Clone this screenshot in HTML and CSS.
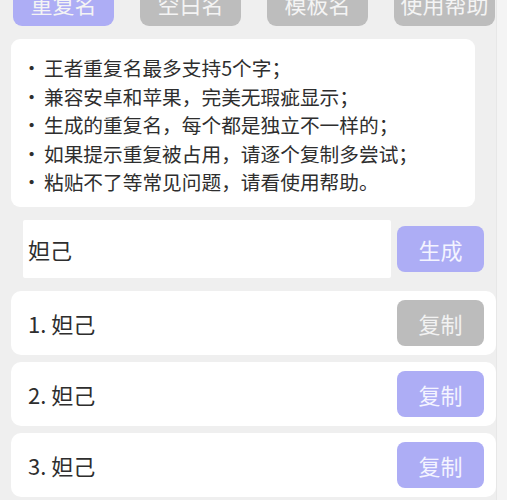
FILE: index.html
```html
<!DOCTYPE html>
<html lang="zh">
<head>
<meta charset="utf-8">
<link rel="stylesheet" href="styles.css">
</head>
<body>
<div class="page">
  <div class="tabs">
    <div class="tab active">重复名</div>
    <div class="tab">空白名</div>
    <div class="tab">模板名</div>
    <div class="tab">使用帮助</div>
  </div>
  <div class="info">
    <div class="line"><span class="dot">·</span><span>王者重复名最多支持5个字；</span></div>
    <div class="line"><span class="dot">·</span><span>兼容安卓和苹果，完美无瑕疵显示；</span></div>
    <div class="line"><span class="dot">·</span><span>生成的重复名，每个都是独立不一样的；</span></div>
    <div class="line"><span class="dot">·</span><span>如果提示重复被占用，请逐个复制多尝试；</span></div>
    <div class="line"><span class="dot">·</span><span>粘贴不了等常见问题，请看使用帮助。</span></div>
  </div>
  <div class="gen">
    <div class="input">妲己</div>
    <div class="btn">生成</div>
  </div>
  <div class="list">
    <div class="row"><span class="name">1. 妲己</span><span class="btn gray">复制</span></div>
    <div class="row"><span class="name">2. 妲己</span><span class="btn">复制</span></div>
    <div class="row"><span class="name">3. 妲己</span><span class="btn">复制</span></div>
  </div>
</div>
</body>
</html>
```
FILE: styles.css
```css
html, body {
  margin: 0;
  padding: 0;
  background: #f4f4f4;
  font-family: "Noto Sans CJK SC", "Noto Sans", sans-serif;
  color: #2e2e2e;
  overflow: hidden;
}
.page {
  width: 496px;
  height: 500px;
  background: #efefef;
  border-right: 1px solid #e7e7e7;
  overflow: hidden;
}
.tabs {
  display: flex;
  gap: 26px;
  padding-left: 13px;
  margin-top: -14px;
}
.tab {
  width: 101px;
  height: 40px;
  border-radius: 9px;
  background: #bdbdbd;
  color: #f4f4f4;
  font-size: 22px;
  line-height: 34px;
  text-align: center;
}
.tab.active {
  background: #adadf5;
}
.info {
  margin: 13px 0 0 11px;
  width: 464px;
  height: 168px;
  box-sizing: border-box;
  padding: 15px 0 0 8px;
  background: #fff;
  border-radius: 9px;
  font-size: 19.7px;
}
.line {
  display: flex;
  height: 28.5px;
  line-height: 28.5px;
}
.dot {
  width: 25px;
  text-align: center;
}
.gen {
  display: flex;
  align-items: center;
  gap: 6px;
  margin: 13px 0 0 23px;
}
.input {
  width: 368px;
  height: 58px;
  box-sizing: border-box;
  padding-left: 5px;
  background: #fff;
  border-radius: 2px;
  font-size: 22px;
  line-height: 58px;
}
.btn {
  width: 87px;
  height: 46px;
  border-radius: 8px;
  background: #adadf5;
  color: #f4f4ff;
  font-size: 22px;
  line-height: 46px;
  text-align: center;
}
.btn.gray {
  background: #bcbcbc;
  color: #f2f2f2;
}
.list {
  display: flex;
  flex-direction: column;
  gap: 7px;
  margin: 13px 0 0 11px;
  width: 485px;
}
.row {
  display: flex;
  align-items: center;
  justify-content: space-between;
  height: 64px;
  box-sizing: border-box;
  padding: 0 12px 0 17px;
  background: #fff;
  border-radius: 10px;
  font-size: 22px;
}
```
